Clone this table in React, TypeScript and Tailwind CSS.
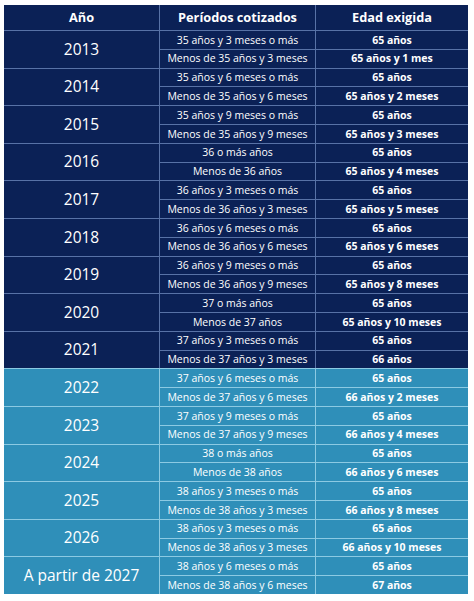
const rows = [
  { year: "2013", a: "35 años y 3 meses o más", b: "Menos de 35 años y 3 meses", ea: "65 años", eb: "65 años y 1 mes" },
  { year: "2014", a: "35 años y 6 meses o más", b: "Menos de 35 años y 6 meses", ea: "65 años", eb: "65 años y 2 meses" },
  { year: "2015", a: "35 años y 9 meses o más", b: "Menos de 35 años y 9 meses", ea: "65 años", eb: "65 años y 3 meses" },
  { year: "2016", a: "36 o más años", b: "Menos de 36 años", ea: "65 años", eb: "65 años y 4 meses" },
  { year: "2017", a: "36 años y 3 meses o más", b: "Menos de 36 años y 3 meses", ea: "65 años", eb: "65 años y 5 meses" },
  { year: "2018", a: "36 años y 6 meses o más", b: "Menos de 36 años y 6 meses", ea: "65 años", eb: "65 años y 6 meses" },
  { year: "2019", a: "36 años y 9 meses o más", b: "Menos de 36 años y 9 meses", ea: "65 años", eb: "65 años y 8 meses" },
  { year: "2020", a: "37 o más años", b: "Menos de 37 años", ea: "65 años", eb: "65 años y 10 meses" },
  { year: "2021", a: "37 años y 3 meses o más", b: "Menos de 37 años y 3 meses", ea: "65 años", eb: "66 años" },
  { year: "2022", a: "37 años y 6 meses o más", b: "Menos de 37 años y 6 meses", ea: "65 años", eb: "66 años y 2 meses" },
  { year: "2023", a: "37 años y 9 meses o más", b: "Menos de 37 años y 9 meses", ea: "65 años", eb: "66 años y 4 meses" },
  { year: "2024", a: "38 o más años", b: "Menos de 38 años", ea: "65 años", eb: "66 años y 6 meses" },
  { year: "2025", a: "38 años y 3 meses o más", b: "Menos de 38 años y 3 meses", ea: "65 años", eb: "66 años y 8 meses" },
  { year: "2026", a: "38 años y 3 meses o más", b: "Menos de 38 años y 3 meses", ea: "65 años", eb: "66 años y 10 meses" },
  { year: "A partir de 2027", a: "38 años y 6 meses o más", b: "Menos de 38 años y 6 meses", ea: "65 años", eb: "67 años" },
];

const App = () => {
  return (
    <div className="w-[474px] h-[601px] bg-white pt-[5px] pl-[4px] font-['Open_Sans',sans-serif] text-white">
      <div className="w-[464px] bg-[#0b2156]">
        {/* header */}
        <div className="flex h-[25px] text-[12.75px] font-bold">
          <div className="w-[156px] flex items-center justify-center border-r border-[#5872a6]">Año</div>
          <div className="w-[156px] flex items-center justify-center border-r border-[#5872a6]">Períodos cotizados</div>
          <div className="flex-1 flex items-center justify-center">Edad exigida</div>
        </div>
        {rows.map((r, i) => {
          const light = i >= 9;
          const line = light ? "border-[#8ccae3]" : "border-[#5872a6]";
          return (
            <div key={r.year} className={`flex h-[37.6px] border-t ${line} ${light ? "bg-[#2f8fb9]" : "bg-[#0b2156]"}`}>
              <div className={`w-[156px] flex items-center justify-center border-r ${line} text-[15.5px] whitespace-nowrap`}>
                {r.year}
              </div>
              <div className="flex-1 flex flex-col text-[10.5px] leading-none whitespace-nowrap">
                <div className="flex flex-1">
                  <div className={`w-[156px] flex items-center justify-center border-r ${line}`}>{r.a}</div>
                  <div className="flex-1 flex items-center justify-center font-bold">{r.ea}</div>
                </div>
                <div className={`flex flex-1 border-t ${line}`}>
                  <div className={`w-[156px] flex items-center justify-center border-r ${line}`}>{r.b}</div>
                  <div className="flex-1 flex items-center justify-center font-bold">{r.eb}</div>
                </div>
              </div>
            </div>
          );
        })}
      </div>
    </div>
  );
};

export default App;
